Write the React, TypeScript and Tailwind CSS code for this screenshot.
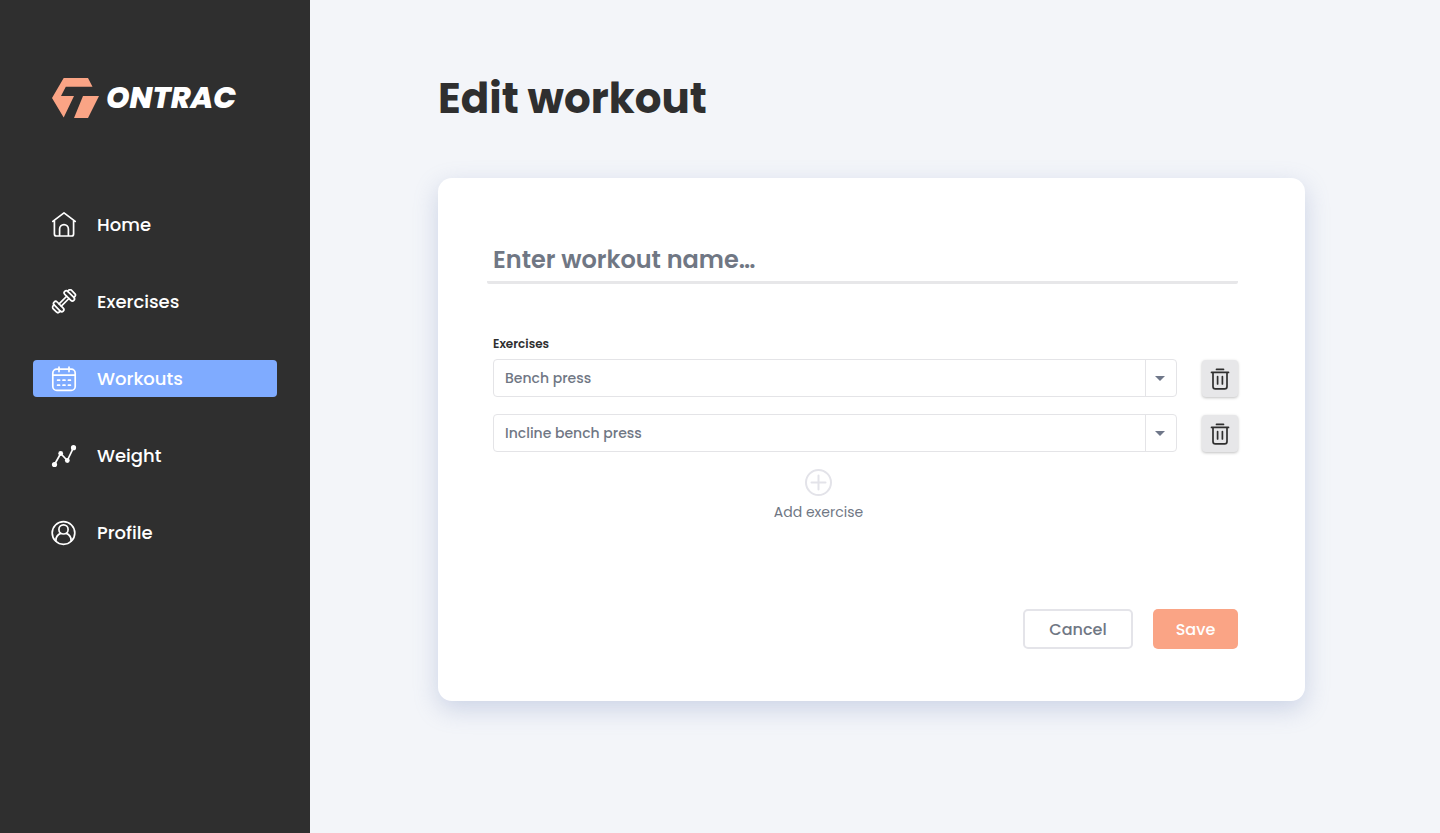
import { useState, type ReactNode } from "react";

function Icon({ children }: { children: ReactNode }) {
  return (
    <svg
      viewBox="0 0 26 26"
      className="size-[26px] shrink-0"
      fill="none"
      stroke="currentColor"
      strokeWidth="1.7"
      strokeLinecap="round"
      strokeLinejoin="round"
      aria-hidden="true"
    >
      {children}
    </svg>
  );
}

const navItems: { label: string; icon: ReactNode }[] = [
  {
    label: "Home",
    icon: (
      <Icon>
        <path d="M1.8 9.4 13 .9l11.200 8.500M3.400 8.400v13.600a2 2 0 0 0 2 2h15.200a2 2 0 0 0 2-2V8.400M8.600 23.800v-6.800a4.400 4.400 0 0 1 8.800 0v6.800" />
      </Icon>
    ),
  },
  {
    label: "Exercises",
    icon: (
      <Icon>
        <g transform="translate(0 -0.8) rotate(-45 13 13)">
          <path d="M7.600 11.400h10.800M7.600 14.600h10.800" />
          <rect x="3.400" y="6.600" width="4.200" height="12.800" rx="2.100" />
          <rect x="18.400" y="6.600" width="4.200" height="12.800" rx="2.100" />
          <path d="M3.400 8.600H2.200A2.200 2.200 0 0 0 0 10.800v4.400a2.200 2.200 0 0 0 2.200 2.200h1.200M22.600 8.600h1.200a2.200 2.200 0 0 1 2.200 2.200v4.400a2.200 2.200 0 0 1-2.200 2.200h-1.200" />
        </g>
      </Icon>
    ),
  },
  {
    label: "Workouts",
    icon: (
      <Icon>
        <rect x="1.800" y="3.200" width="22.400" height="21.200" rx="4" />
        <path d="M1.800 9.200h22.400M8 1.200v4.400M18 1.200v4.400M6.600 14.200h2M12 14.200h2M17.400 14.200h2M6.600 19.200h2M12 19.200h2M17.400 19.200h2" />
      </Icon>
    ),
  },
  {
    label: "Weight",
    icon: (
      <Icon>
        <path d="M3.500 21.500 9.700 10.500l6.600 7L22.500 4.700" />
        <g fill="currentColor" stroke="none">
          <circle cx="3.500" cy="21.500" r="2.600" />
          <circle cx="9.700" cy="10.500" r="2.400" />
          <circle cx="16.300" cy="17.500" r="2.400" />
          <circle cx="22.500" cy="4.700" r="2.600" />
        </g>
      </Icon>
    ),
  },
  {
    label: "Profile",
    icon: (
      <Icon>
        <circle cx="12.500" cy="13" r="11.300" />
        <circle cx="12.500" cy="9.400" r="4.600" />
        <path d="M4.900 21v-.6a7.600 7.600 0 0 1 4.800-7M20.100 21v-.6a7.600 7.600 0 0 0-4.800-7" />
      </Icon>
    ),
  },
];

function Logo() {
  return (
    <a href="#home" className="ml-[52px] flex h-10 items-center gap-[7px]">
      <svg viewBox="0 0 47 40" className="h-10 w-[47px] shrink-0" fill="#faa485" aria-hidden="true">
        <path d="M11.700 0H36l4.500 8.700H13.800L9 18h13L11.700 39.500 0 20z" />
        <path d="M31 18h16L36 40H22z" />
      </svg>
      <span className="text-[30px] leading-10 font-extrabold text-white italic">
        ONTRAC
      </span>
    </a>
  );
}

function Sidebar() {
  return (
    <aside className="w-[310px] shrink-0 bg-[#2f2f2f] pt-[78px]">
      <Logo />
      <nav className="mt-[88px] flex flex-col gap-10 px-[33px]">
        {navItems.map(({ label, icon }) => (
          <a
            key={label}
            href={"#" + label.toLowerCase()}
            aria-current={label === "Workouts" ? "page" : undefined}
            className="flex h-[37px] items-center gap-5 rounded pl-[18px] text-lg font-medium text-white aria-[current=page]:bg-[#7fabff]"
          >
            {icon}
            {label}
          </a>
        ))}
      </nav>
    </aside>
  );
}

function TrashIcon() {
  return (
    <svg
      viewBox="0 0 20 22"
      className="h-[22px] w-5"
      fill="none"
      stroke="currentColor"
      strokeWidth="1.700"
      strokeLinecap="round"
      aria-hidden="true"
    >
      <path d="M6.500 1.400h7M1.500 4.400h17M3 4.400v14a2.400 2.400 0 0 0 2.400 2.400h9.200a2.400 2.400 0 0 0 2.400-2.400v-14M7.600 8.600v7.400M12.400 8.600v7.400" />
    </svg>
  );
}

const exerciseOptions = ["Bench press", "Incline bench press"];

function ExerciseRow({ value, index, onChange, onRemove }: {
  value: string;
  index: number;
  onChange: (value: string) => void;
  onRemove: () => void;
}) {
  return (
    <div className="flex items-end gap-[25px]">
      <div className="relative h-[38px] flex-1">
        <select
          id={"exercise-" + index}
          aria-label={"Exercise " + (index + 1)}
          value={value}
          onChange={(e) => onChange(e.target.value)}
          className="h-full w-full appearance-none rounded border border-[#e4e4e7] bg-white pr-10 pl-[11px] text-sm font-medium text-[#707784]"
        >
          {exerciseOptions.map((option) => (
            <option key={option}>{option}</option>
          ))}
        </select>
        <span className="pointer-events-none absolute inset-y-0 right-0 flex w-8 items-center border-l border-[#e4e4e7] pl-[9px]">
          <svg viewBox="0 0 10 5" className="h-[5px] w-2.5" fill="#6f7789" aria-hidden="true">
            <path d="M0 0h10L5 5z" />
          </svg>
        </span>
      </div>
      <button
        type="button"
        aria-label={"Remove " + value}
        onClick={onRemove}
        className="flex h-[37px] w-9 items-center justify-center rounded bg-[#e7e7e9] pt-px text-[#2f2f2f] shadow-[0_1px_3px_rgba(0,0,0,0.25)]"
      >
        <TrashIcon />
      </button>
    </div>
  );
}

export default function App() {
  const [name, setName] = useState("");
  const [exercises, setExercises] = useState(exerciseOptions);

  return (
    <div className="flex min-h-screen bg-[#f3f5f9] font-['Poppins','Inter',sans-serif]">
      <Sidebar />
      <main className="flex-1 pt-[67px] pr-[135px] pb-16 pl-32">
        <h1 className="text-[42px] leading-16 font-bold text-[#2f2f2f]">Edit workout</h1>
        <form
          onSubmit={(e) => e.preventDefault()}
          className="mt-[47px] rounded-[14px] bg-white pt-[60px] pr-[67px] pb-[52px] pl-[49px] shadow-[0_8px_24px_rgba(120,140,190,0.32)]"
        >
          <input
            type="text"
            aria-label="Workout name"
            placeholder="Enter workout name…"
            value={name}
            onChange={(e) => setName(e.target.value)}
            className="block h-[46px] w-full rounded-xs border-b-3 border-[#e7e7e9] px-1.5 text-2xl font-semibold text-[#2f2f2f] outline-none placeholder:text-[#707784]"
          />
          <div className="mt-[50px] pl-1.5">
            <label htmlFor="exercise-0" className="block text-xs leading-5 font-semibold text-[#2f2f2f]">
              Exercises
            </label>
            <div className="mt-[5px] flex flex-col gap-[17px]">
              {exercises.map((exercise, i) => (
                <ExerciseRow
                  key={i}
                  index={i}
                  value={exercise}
                  onChange={(value) => setExercises(exercises.map((x, j) => (j === i ? value : x)))}
                  onRemove={() => setExercises(exercises.filter((_, j) => j !== i))}
                />
              ))}
            </div>
          </div>
          <div className="mt-4 flex justify-center pr-[88px]">
            <button
              type="button"
              onClick={() => setExercises([...exercises, exerciseOptions[0]])}
              className="flex flex-col items-center gap-1.5 text-sm text-[#707784]"
            >
              <svg viewBox="0 0 28 28" className="size-7" fill="none" stroke="#e3e3e9" strokeWidth="2" strokeLinecap="round" aria-hidden="true">
                <circle cx="14.500" cy="14.500" r="12.500" />
                <path d="M14.500 7.500v14M7.500 14.500h14" />
              </svg>
              Add exercise
            </button>
          </div>
          <div className="mt-[87px] flex justify-end gap-5">
            <button type="button" className="h-10 w-[110px] rounded-[5px] border-2 border-[#e4e4e9] pt-0.5 font-medium text-[#707784]">
              Cancel
            </button>
            <button type="submit" className="h-10 w-[85px] rounded-[5px] bg-[#faa485] pt-0.5 font-medium text-white">
              Save
            </button>
          </div>
        </form>
      </main>
    </div>
  );
}
